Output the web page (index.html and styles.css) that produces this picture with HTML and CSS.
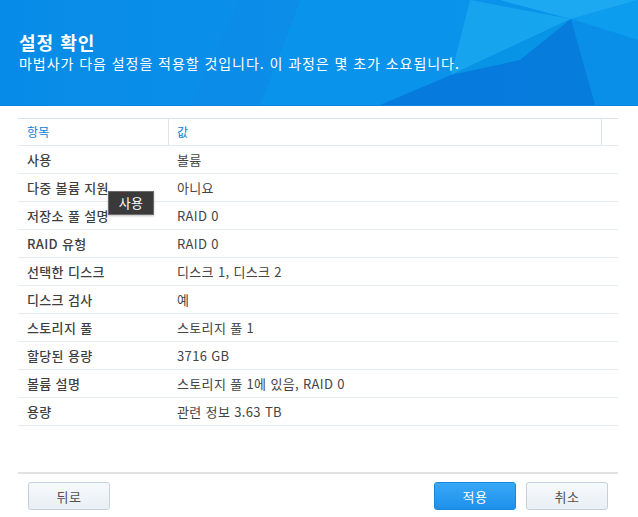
FILE: index.html
```
<!DOCTYPE html>
<html lang="ko">
<head>
<meta charset="utf-8">
<link rel="stylesheet" href="styles.css">
</head>
<body>
<div class="wizard">
  <header class="banner">
    <svg class="banner-art" width="638" height="105" viewBox="0 0 638 105" preserveAspectRatio="none">
      <polygon points="300,0 470,0 451,75 380,105 260,105" fill="#0a94ea" opacity="0.7"/>
      <polygon points="470,0 571,19 451,75" fill="#17a6ef" opacity="0.9"/>
      <polygon points="500,0 638,0 571,19" fill="#22aef2" opacity="0.8"/>
      <polygon points="571,19 638,0 638,40" fill="#0d9df0" opacity="0.9"/>
      <polygon points="571,19 638,40 638,105 595,105" fill="#0a8ee8" opacity="0.9"/>
      <polygon points="451,75 571,19 595,105 380,105" fill="#0679dc" opacity="0.9"/>
      <polygon points="451,75 571,19 520,60" fill="#0aaef0" opacity="0.5"/>
      <polygon points="190,105 260,105 300,0 240,0" fill="#0c8ae6" opacity="0.5"/>
    </svg>
    <div class="banner-text">
      <h1 class="title">설정 확인</h1>
      <p class="subtitle">마법사가 다음 설정을 적용할 것입니다. 이 과정은 몇 초가 소요됩니다.</p>
    </div>
  </header>

  <section class="grid">
    <div class="grid-head">
      <div class="hcell c-name">항목</div>
      <div class="hcell c-val">값</div>
      <div class="hcell c-pad"></div>
    </div>
    <div class="row"><div class="cell c-name">사용</div><div class="cell c-val">볼륨</div></div>
    <div class="row">
      <div class="cell c-name">다중 볼륨 지원</div><div class="cell c-val">아니요</div>
      <div class="tooltip">사용</div>
    </div>
    <div class="row"><div class="cell c-name">저장소 풀 설명</div><div class="cell c-val">RAID 0</div></div>
    <div class="row"><div class="cell c-name">RAID 유형</div><div class="cell c-val">RAID 0</div></div>
    <div class="row"><div class="cell c-name">선택한 디스크</div><div class="cell c-val">디스크 1, 디스크 2</div></div>
    <div class="row"><div class="cell c-name">디스크 검사</div><div class="cell c-val">예</div></div>
    <div class="row"><div class="cell c-name">스토리지 풀</div><div class="cell c-val">스토리지 풀 1</div></div>
    <div class="row"><div class="cell c-name">할당된 용량</div><div class="cell c-val">3716 GB</div></div>
    <div class="row"><div class="cell c-name">볼륨 설명</div><div class="cell c-val">스토리지 풀 1에 있음, RAID 0</div></div>
    <div class="row"><div class="cell c-name">용량</div><div class="cell c-val">관련 정보 3.63 TB</div></div>
  </section>

  <footer class="footer">
    <button class="btn">뒤로</button>
    <div class="spacer"></div>
    <button class="btn btn-primary">적용</button>
    <button class="btn">취소</button>
  </footer>
</div>
</body>
</html>
```
FILE: styles.css
```
* { box-sizing: border-box; }
html, body { margin: 0; padding: 0; background: #fff; }
body {
  width: 638px;
  height: 517px;
  overflow: hidden;
  font-family: "Noto Sans CJK KR", "Noto Sans", sans-serif;
  color: #404040;
}
.wizard { display: flex; flex-direction: column; height: 517px; }

.banner {
  position: relative;
  height: 106px;
  flex: none;
  background: linear-gradient(90deg, #078be8 0%, #0a90ea 45%, #0a95eb 100%);
  border-bottom: 1px solid #0a84e0;
  overflow: hidden;
}
.banner-art { position: absolute; left: 0; top: 0; }
.banner-text {
  position: relative;
  padding: 31px 0 0 19px;
  color: #fff;
}
.title {
  margin: 0;
  font-size: 18px;
  font-weight: bold;
  line-height: 23px;
  letter-spacing: 1px;
}
.subtitle {
  margin: 0;
  font-size: 14px;
  line-height: 19px;
  letter-spacing: 0.95px;
}

.grid {
  margin: 12px 20px 0 18px;
  display: flex;
  flex-direction: column;
}
.grid-head {
  display: flex;
  height: 28px;
  border-top: 1px solid #dbe2e9;
  border-bottom: 1px solid #e3e9ef;
}
.hcell {
  font-size: 12px;
  color: #0b7ed6;
  line-height: 26px;
  letter-spacing: 0.3px;
}
.c-name { width: 150px; padding-left: 9px; flex: none; }
.c-val { flex: 1; padding-left: 9px; }
.hcell.c-val { border-left: 1px solid #e0e6ec; padding-left: 8px; }
.c-pad { width: 17px; flex: none; border-left: 1px solid #dbe2e9; }

.row {
  position: relative;
  display: flex;
  height: 28px;
  border-bottom: 1px solid #e6ebf0;
  font-size: 13px;
  line-height: 27px;
  letter-spacing: 0.35px;
}
.row .c-name { font-weight: 500; color: #3f3f3f; }
.row .c-val { color: #444; }

.tooltip {
  position: absolute;
  left: 90px;
  top: 17px;
  width: 46px;
  height: 24px;
  background: #3a3a3a;
  border: 1px solid #6b6b6b;
  color: #fff;
  font-size: 13px;
  line-height: 21px;
  text-align: center;
  font-weight: normal;
  box-shadow: 0 1px 2px rgba(0,0,0,0.25);
}

.footer {
  margin: auto 20px 0 18px;
  height: 45px;
  border-top: 2px solid #e2e2e2;
  display: flex;
  align-items: flex-start;
  padding: 8px 10px 0 10px;
  gap: 10px;
}
.spacer { flex: 1; }
.btn {
  width: 82px;
  height: 28px;
  border: 1px solid #c5d0db;
  border-radius: 3px;
  background: linear-gradient(#f6f9fc, #e9eff5);
  color: #505050;
  font-family: "Noto Sans CJK KR", sans-serif;
  font-size: 13px;
  letter-spacing: 0.5px;
  padding: 0;
}
.btn-primary {
  border-color: #1a86da;
  background: linear-gradient(#38a9f8, #1e90ea);
  color: #fff;
}
```
